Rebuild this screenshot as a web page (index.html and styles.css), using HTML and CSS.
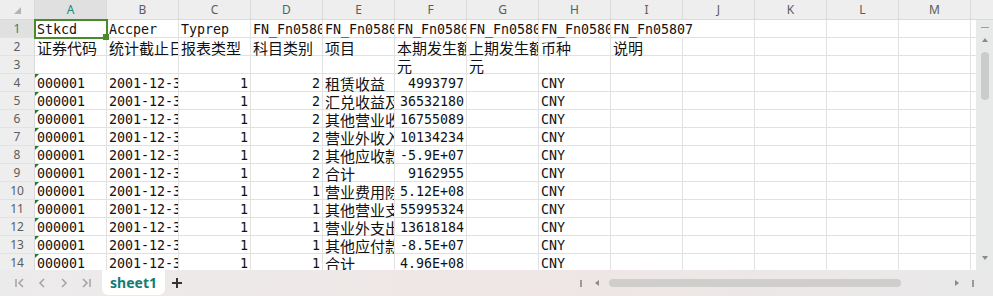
FILE: index.html
```html
<!DOCTYPE html>
<html lang="zh-CN">
<head>
    <meta charset="UTF-8">
    <title>sheet1</title>
    <link rel="stylesheet" href="styles.css">
</head>
<body>
<div class="app">
    <div class="sheet">
        <div class="row">
            <div class="corner"><svg width="7" height="7"><polygon points="7,0 7,7 0,7" fill="#b3b3b3"/></svg></div>
            <div class="ch sel">A</div><div class="ch">B</div><div class="ch">C</div><div class="ch">D</div><div class="ch">E</div><div class="ch">F</div><div class="ch">G</div><div class="ch">H</div><div class="ch">I</div><div class="ch">J</div><div class="ch">K</div><div class="ch">L</div><div class="ch">M</div><div class="ch">N</div>
        </div>
        <div class="row">
            <div class="rh sel">1</div>
            <div class="c cur">Stkcd</div><div class="c">Accper</div><div class="c">Typrep</div><div class="c">FN_Fn05801</div><div class="c">FN_Fn05802</div><div class="c">FN_Fn05803</div><div class="c">FN_Fn05804</div><div class="c">FN_Fn05806</div><div class="c over">FN_Fn05807</div><div class="c"></div><div class="c"></div><div class="c"></div><div class="c"></div><div class="c"></div>
        </div>
        <div class="row">
            <div class="rh">2</div>
            <div class="c zh">证券代码</div><div class="c zh">统计截止日期</div><div class="c zh">报表类型</div><div class="c zh">科目类别</div><div class="c zh">项目</div><div class="c zh">本期发生额</div><div class="c zh">上期发生额</div><div class="c zh">币种</div><div class="c zh">说明</div><div class="c"></div><div class="c"></div><div class="c"></div><div class="c"></div><div class="c"></div>
        </div>
        <div class="row">
            <div class="rh">3</div>
            <div class="c"></div><div class="c"></div><div class="c"></div><div class="c"></div><div class="c"></div><div class="c zh">元</div><div class="c zh">元</div><div class="c"></div><div class="c"></div><div class="c"></div><div class="c"></div><div class="c"></div><div class="c"></div><div class="c"></div>
        </div>
        <div class="row">
            <div class="rh">4</div>
            <div class="c t">000001</div><div class="c">2001-12-31</div><div class="c n">1</div><div class="c n">2</div><div class="c zh">租赁收益</div><div class="c n">4993797</div><div class="c"></div><div class="c">CNY</div><div class="c"></div><div class="c"></div><div class="c"></div><div class="c"></div><div class="c"></div><div class="c"></div>
        </div>
        <div class="row">
            <div class="rh">5</div>
            <div class="c t">000001</div><div class="c">2001-12-31</div><div class="c n">1</div><div class="c n">2</div><div class="c zh">汇兑收益及损失</div><div class="c n">36532180</div><div class="c"></div><div class="c">CNY</div><div class="c"></div><div class="c"></div><div class="c"></div><div class="c"></div><div class="c"></div><div class="c"></div>
        </div>
        <div class="row">
            <div class="rh">6</div>
            <div class="c t">000001</div><div class="c">2001-12-31</div><div class="c n">1</div><div class="c n">2</div><div class="c zh">其他营业收入</div><div class="c n">16755089</div><div class="c"></div><div class="c">CNY</div><div class="c"></div><div class="c"></div><div class="c"></div><div class="c"></div><div class="c"></div><div class="c"></div>
        </div>
        <div class="row">
            <div class="rh">7</div>
            <div class="c t">000001</div><div class="c">2001-12-31</div><div class="c n">1</div><div class="c n">2</div><div class="c zh">营业外收入</div><div class="c n">10134234</div><div class="c"></div><div class="c">CNY</div><div class="c"></div><div class="c"></div><div class="c"></div><div class="c"></div><div class="c"></div><div class="c"></div>
        </div>
        <div class="row">
            <div class="rh">8</div>
            <div class="c t">000001</div><div class="c">2001-12-31</div><div class="c n">1</div><div class="c n">2</div><div class="c zh">其他应收款项</div><div class="c n">-5.9E+07</div><div class="c"></div><div class="c">CNY</div><div class="c"></div><div class="c"></div><div class="c"></div><div class="c"></div><div class="c"></div><div class="c"></div>
        </div>
        <div class="row">
            <div class="rh">9</div>
            <div class="c t">000001</div><div class="c">2001-12-31</div><div class="c n">1</div><div class="c n">2</div><div class="c zh">合计</div><div class="c n">9162955</div><div class="c"></div><div class="c">CNY</div><div class="c"></div><div class="c"></div><div class="c"></div><div class="c"></div><div class="c"></div><div class="c"></div>
        </div>
        <div class="row">
            <div class="rh">10</div>
            <div class="c t">000001</div><div class="c">2001-12-31</div><div class="c n">1</div><div class="c n">1</div><div class="c zh">营业费用除外</div><div class="c n">5.12E+08</div><div class="c"></div><div class="c">CNY</div><div class="c"></div><div class="c"></div><div class="c"></div><div class="c"></div><div class="c"></div><div class="c"></div>
        </div>
        <div class="row">
            <div class="rh">11</div>
            <div class="c t">000001</div><div class="c">2001-12-31</div><div class="c n">1</div><div class="c n">1</div><div class="c zh">其他营业支出</div><div class="c n">55995324</div><div class="c"></div><div class="c">CNY</div><div class="c"></div><div class="c"></div><div class="c"></div><div class="c"></div><div class="c"></div><div class="c"></div>
        </div>
        <div class="row">
            <div class="rh">12</div>
            <div class="c t">000001</div><div class="c">2001-12-31</div><div class="c n">1</div><div class="c n">1</div><div class="c zh">营业外支出</div><div class="c n">13618184</div><div class="c"></div><div class="c">CNY</div><div class="c"></div><div class="c"></div><div class="c"></div><div class="c"></div><div class="c"></div><div class="c"></div>
        </div>
        <div class="row">
            <div class="rh">13</div>
            <div class="c t">000001</div><div class="c">2001-12-31</div><div class="c n">1</div><div class="c n">1</div><div class="c zh">其他应付款项</div><div class="c n">-8.5E+07</div><div class="c"></div><div class="c">CNY</div><div class="c"></div><div class="c"></div><div class="c"></div><div class="c"></div><div class="c"></div><div class="c"></div>
        </div>
        <div class="row">
            <div class="rh">14</div>
            <div class="c t">000001</div><div class="c">2001-12-31</div><div class="c n">1</div><div class="c n">1</div><div class="c zh">合计</div><div class="c n">4.96E+08</div><div class="c"></div><div class="c">CNY</div><div class="c"></div><div class="c"></div><div class="c"></div><div class="c"></div><div class="c"></div><div class="c"></div>
        </div>
    </div>

    <div class="vscroll">
        <span class="dash"></span>
        <svg class="arrow-up" width="6" height="4"><polygon points="0,4 3,0 6,4" fill="#8a8a8a"/></svg>
        <span class="vthumb"></span>
        <svg class="arrow-down" width="6" height="4"><polygon points="0,0 6,0 3,4" fill="#8a8a8a"/></svg>
    </div>

    <div class="tabbar">
        <div class="nav">
            <span class="nav-btn"><svg width="10" height="10"><line x1="1" y1="1" x2="1" y2="9" stroke="#a3a3a3" stroke-width="1.5"/><polyline points="8,1 4,5 8,9" fill="none" stroke="#a3a3a3" stroke-width="1.5"/></svg></span>
            <span class="nav-btn"><svg width="10" height="10"><polyline points="7,1 3,5 7,9" fill="none" stroke="#a3a3a3" stroke-width="1.5"/></svg></span>
            <span class="nav-btn"><svg width="10" height="10"><polyline points="3,1 7,5 3,9" fill="none" stroke="#a3a3a3" stroke-width="1.5"/></svg></span>
            <span class="nav-btn"><svg width="10" height="10"><polyline points="2,1 6,5 2,9" fill="none" stroke="#a3a3a3" stroke-width="1.5"/><line x1="9" y1="1" x2="9" y2="9" stroke="#a3a3a3" stroke-width="1.5"/></svg></span>
        </div>
        <div class="tab">sheet1</div>
        <span class="add"><svg width="10" height="10"><line x1="5" y1="0" x2="5" y2="10" stroke="#333" stroke-width="2"/><line x1="0" y1="5" x2="10" y2="5" stroke="#333" stroke-width="2"/></svg></span>

        <div class="hscroll">
            <span class="hbtn"><span class="bar"></span></span>
            <span class="hbtn left"><svg width="4" height="6"><polygon points="4,0 4,6 0,3" fill="#8a8a8a"/></svg></span>
            <span class="hthumb"></span>
            <span class="spacer"></span>
            <span class="hbtn"><svg width="4" height="6"><polygon points="0,0 4,3 0,6" fill="#8a8a8a"/></svg></span>
            <span class="hbtn right"><span class="bar"></span></span>
        </div>
    </div>
</div>
</body>
</html>
```

FILE: styles.css
```css
* {
    box-sizing: border-box;
}
body {
    margin: 0;
    background: #fff;
    font-family: "Noto Sans", sans-serif;
}
.app {
    position: relative;
    width: 993px;
    height: 296px;
    overflow: hidden;
    display: flex;
    flex-direction: column;
}

/* grid */
.sheet {
    height: 270px;
    flex: none;
    overflow: hidden;
    display: grid;
    grid-template-columns: 35px repeat(14, 72px);
    grid-template-rows: 20px;
    grid-auto-rows: 18px;
}
.row {
    display: contents;
}
.corner,
.ch,
.rh {
    background: #eeeeee;
    color: #5c5c5c;
    font-size: 12px;
    text-align: center;
    border-right: 1px solid #dadada;
    border-bottom: 1px solid #dadada;
}
.corner {
    display: flex;
    align-items: center;
    justify-content: center;
    padding-top: 2px;
}
.ch {
    line-height: 20px;
}
.rh {
    line-height: 18px;
    border-bottom-color: #e2e2e2;
}
.sel {
    background: #e0e0e0;
    color: #17877d;
}
.c {
    position: relative;
    padding: 1px 2px 0;
    border-right: 1px solid #e1e1e1;
    border-bottom: 1px solid #e1e1e1;
    font-family: "DejaVu Sans Mono", monospace;
    font-size: 13.3px;
    line-height: 17px;
    color: #111;
    white-space: nowrap;
    overflow-x: clip;
    overflow-y: visible;
}
.c.zh {
    padding-top: 2px;
    font-family: "Noto Sans CJK SC", sans-serif;
    font-size: 15px;
    line-height: 15px;
}
.c.n {
    text-align: right;
}
.c.over {
    overflow: visible;
    border-right-color: transparent;
}
.c.t::before {
    content: "";
    position: absolute;
    left: 0;
    top: 0;
    border-top: 4px solid #1f7d2a;
    border-right: 4px solid transparent;
}
.c.cur {
    overflow: visible;
    z-index: 1;
}
.c.cur::after {
    content: "";
    position: absolute;
    left: -1px;
    top: -1px;
    right: -2px;
    bottom: -2px;
    border: 2px solid #4b8a2b;
}
.c.cur::before {
    content: "";
    position: absolute;
    right: -3px;
    bottom: -3px;
    width: 6px;
    height: 6px;
    background: #4b8a2b;
    z-index: 1;
}

/* vertical scrollbar */
.vscroll {
    position: absolute;
    right: 0;
    top: 20px;
    width: 17px;
    height: 250px;
    background: #e8e9e9;
    display: flex;
    flex-direction: column;
    align-items: center;
}
.dash {
    width: 8px;
    height: 1px;
    margin-top: 7px;
    background: #9c9c9c;
}
.arrow-up {
    margin-top: 10px;
}
.vthumb {
    width: 8px;
    height: 48px;
    margin-top: 10px;
    border-radius: 4px;
    background: #cbcbcb;
}
.arrow-down {
    margin-top: auto;
    margin-bottom: 10px;
}

/* bottom bar */
.tabbar {
    flex: 1;
    display: flex;
    align-items: center;
    background: linear-gradient(90deg, #ecebeb 0%, #efe6e5 55%, #e9e9e9 100%);
}
.nav {
    display: flex;
    padding-left: 9px;
}
.nav-btn {
    width: 22px;
    height: 26px;
    display: flex;
    align-items: center;
    justify-content: center;
}
.tab {
    align-self: flex-start;
    width: 63px;
    height: 25px;
    margin-left: 5px;
    background: #fff;
    border-radius: 0 0 6px 6px;
    color: #137d74;
    font-weight: bold;
    font-size: 14px;
    line-height: 25px;
    text-align: center;
}
.add {
    width: 24px;
    height: 26px;
    display: flex;
    align-items: center;
    justify-content: center;
}
.hscroll {
    margin-left: auto;
    width: 418px;
    height: 26px;
    display: flex;
    align-items: center;
    padding-right: 14px;
}
.hbtn {
    width: 12px;
    height: 26px;
    display: flex;
    align-items: center;
    justify-content: center;
}
.hbtn.left,
.hbtn.right {
    margin-left: 4px;
}
.bar {
    width: 1.5px;
    height: 7px;
    background: #9a9a9a;
}
.hthumb {
    width: 292px;
    height: 8px;
    margin-left: 6px;
    border-radius: 4px;
    background: #d0cdcd;
}
.spacer {
    flex: 1;
}
```
